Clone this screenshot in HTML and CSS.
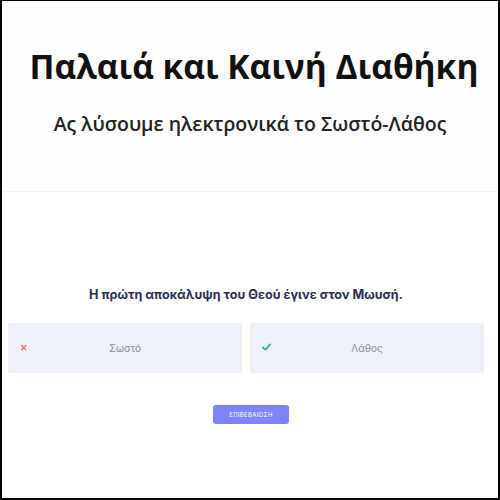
FILE: index.html
```html
<html>
<head>
<meta charset="utf-8">
<link rel="stylesheet" href="styles.css">
</head>
<body>
<div class="frame">
  <div class="header">
    <h1 class="title">Παλαιά και Καινή Διαθήκη</h1>
    <h2 class="subtitle">Ας λύσουμε ηλεκτρονικά το Σωστό-Λάθος</h2>
  </div>
  <div class="quiz">
    <p class="question">Η πρώτη αποκάλυψη του Θεού έγινε στον Μωυσή.</p>
    <div class="answers">
      <div class="answer">
        <span class="mark wrong">&#x2715;</span>
        <span class="label">Σωστό</span>
      </div>
      <div class="answer">
        <span class="mark right">
          <svg width="9" height="8" viewBox="0 0 9 8"><path d="M1 4.5 L3.4 6.6 L8 1.4" fill="none" stroke="#3fae7a" stroke-width="1.8" stroke-linecap="round" stroke-linejoin="round"/></svg>
        </span>
        <span class="label">Λάθος</span>
      </div>
    </div>
    <div class="actions">
      <button class="confirm">ΕΠΙΒΕΒΑΙΩΣΗ</button>
    </div>
  </div>
</div>
</body>
</html>
```

FILE: styles.css
```css
html, body {
  margin: 0;
  padding: 0;
}

.frame {
  box-sizing: border-box;
  width: 500px;
  height: 500px;
  border: 2px solid #000;
  border-top-width: 1px;
  background: #fff;
}

.header {
  background: #fdfdfd;
  border-bottom: 1px solid #f3f3f3;
  height: 191px;
  padding-top: 41px;
  box-sizing: border-box;
  text-align: center;
  font-family: "Open Sans", "Noto Sans", sans-serif;
  white-space: nowrap;
}

.title {
  margin: 0 0 0 8px;
  font-size: 33.5px;
  font-weight: 700;
  color: #111;
  line-height: 48px;
}

.subtitle {
  margin: 21px 0 0 0;
  font-size: 19.5px;
  font-weight: 600;
  color: #222;
  line-height: 26px;
}

.quiz {
  font-family: Inter, "Noto Sans", sans-serif;
  padding: 0 14px 0 6px;
}

.question {
  margin: 95px 0 0 0;
  text-align: center;
  font-size: 12.6px;
  font-weight: 700;
  color: #2a2f4f;
  line-height: 16px;
}

.answers {
  display: grid;
  grid-template-columns: 1fr 1fr;
  gap: 8px;
  margin-top: 20px;
}

.answer {
  position: relative;
  height: 50px;
  background: #eff1f9;
  border-radius: 2px;
  display: flex;
  align-items: center;
  justify-content: center;
}

.mark {
  position: absolute;
  left: 12px;
  top: 20px;
  font-size: 9px;
  line-height: 10px;
}

.wrong {
  color: #f06a6a;
  font-weight: 700;
}

.label {
  font-size: 10px;
  color: #8a8d96;
}

.actions {
  text-align: center;
  margin-top: 32px;
}

.confirm {
  background: #7c84f6;
  color: #fff;
  border: none;
  border-radius: 3px;
  font-family: Inter, "Noto Sans", sans-serif;
  font-size: 6px;
  letter-spacing: 0.3px;
  width: 76px;
  height: 19px;
  padding: 0;
  margin-left: 10px;
}
```
